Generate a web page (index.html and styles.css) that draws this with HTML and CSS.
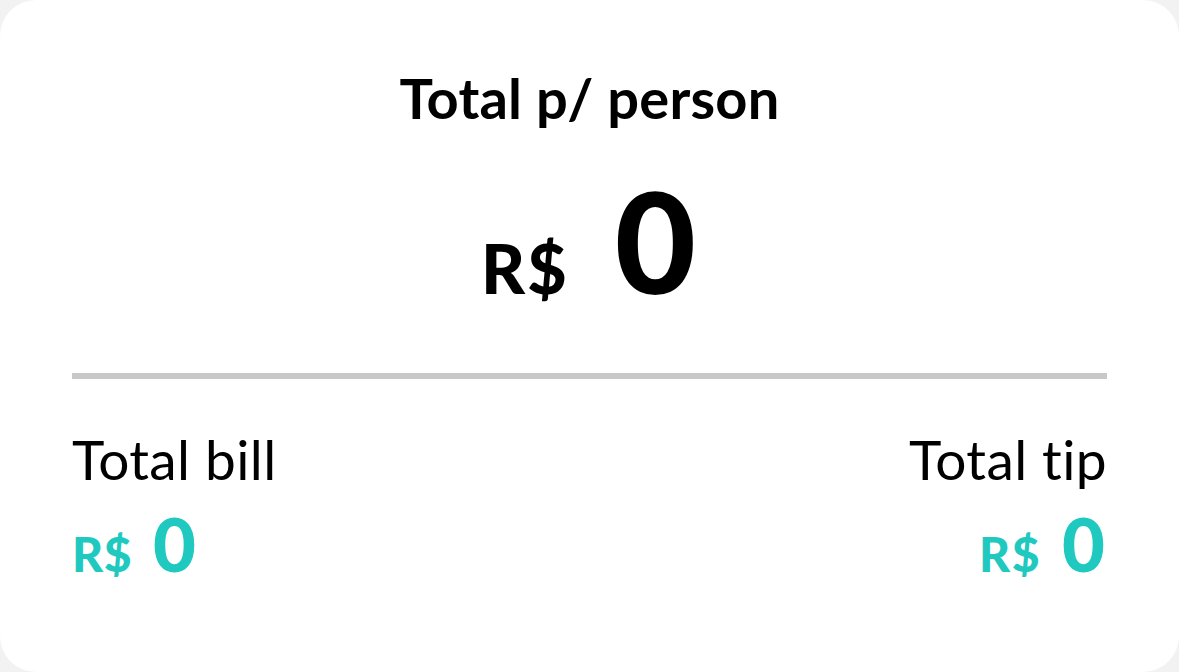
FILE: index.html
```html
<!DOCTYPE html>
<html lang="en">
<head>
<meta charset="utf-8">
<title>Total p/ person</title>
<link rel="stylesheet" href="styles.css">
</head>
<body>
<main class="card">
  <section class="per-person">
    <h1 class="title">Total p/ person</h1>
    <div class="amount amount-main">
      <span class="currency">R$</span>
      <span class="value">0</span>
    </div>
  </section>
  <hr class="divider">
  <section class="summary">
    <div class="summary-item">
      <div class="label">Total bill</div>
      <div class="amount amount-small">
        <span class="currency">R$</span>
        <span class="value">0</span>
      </div>
    </div>
    <div class="summary-item summary-item-right">
      <div class="label">Total tip</div>
      <div class="amount amount-small">
        <span class="currency">R$</span>
        <span class="value">0</span>
      </div>
    </div>
  </section>
</main>
</body>
</html>
```

FILE: styles.css
```css
html, body {
  margin: 0;
  padding: 0;
  background: #f2f2f2;
}

body {
  font-family: Lato, "Noto Sans", "Liberation Sans", sans-serif;
  color: #000;
}

.card {
  box-sizing: border-box;
  width: 1179px;
  height: 672px;
  background: #fff;
  border-radius: 36px;
  padding: 70px 72px 0;
  display: flex;
  flex-direction: column;
}

.per-person {
  display: flex;
  flex-direction: column;
  align-items: center;
}

.title {
  margin: 0;
  font-size: 56px;
  line-height: 56px;
  font-weight: 700;
  letter-spacing: 0.2px;
}

.amount {
  display: flex;
  align-items: baseline;
  line-height: 1;
}

.amount-main {
  margin-top: 44px;
  gap: 46px;
}

.amount-main .currency {
  font-size: 68px;
  font-weight: 900;
  letter-spacing: 2px;
}

.amount-main .value {
  font-size: 140px;
  font-weight: 900;
  letter-spacing: 2px;
}

.divider {
  margin: 63px 0 0;
  border: 0;
  height: 6px;
  background: #c8c8c8;
}

.summary {
  display: flex;
  justify-content: space-between;
  margin-top: 52px;
}

.summary-item {
  display: flex;
  flex-direction: column;
  align-items: flex-start;
}

.summary-item-right {
  align-items: flex-end;
}

.label {
  font-size: 55px;
  line-height: 56px;
  font-weight: 400;
  letter-spacing: 0.4px;
}

.amount-small {
  margin-top: 20px;
  gap: 21px;
  color: #1fc9bf;
}

.amount-small .currency {
  font-size: 48px;
  font-weight: 900;
  letter-spacing: 0.5px;
}

.summary-item-right .amount-small .currency {
  letter-spacing: 1.5px;
}

.amount-small .value {
  font-size: 74px;
  font-weight: 900;
}

.summary-item-right .amount-small .value {
  margin-right: 2px;
}
```
